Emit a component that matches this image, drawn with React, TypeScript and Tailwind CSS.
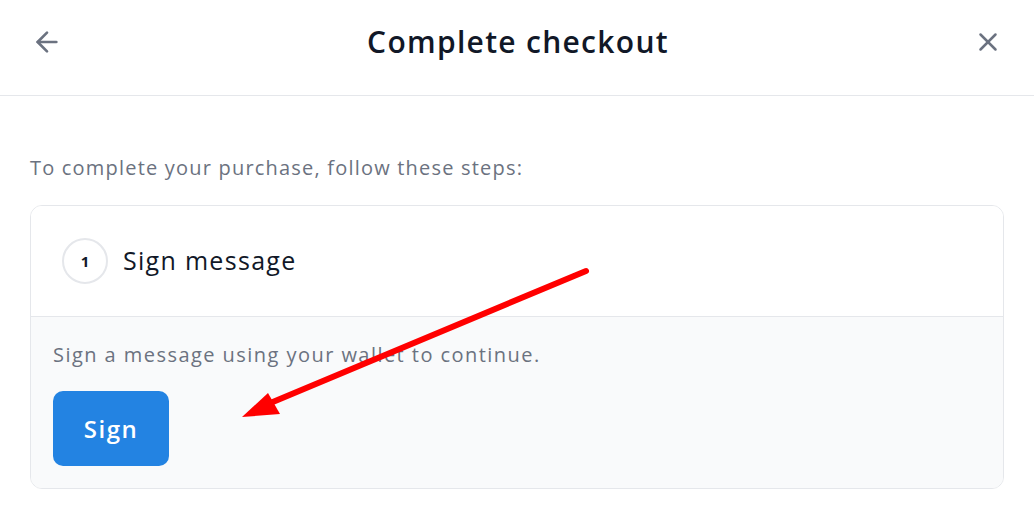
import React from "react";

export default function App() {
  return (
    <div
      className="relative w-[1034px] h-[514px] bg-white overflow-hidden"
      style={{ fontFamily: '"Open Sans", "Noto Sans", sans-serif' }}
    >
      <header className="h-[96px] border-b border-[#e5e7eb] flex items-center justify-between pl-[31px] pr-[31px] pb-[12px]">
        <svg width="32" height="32" viewBox="0 0 24 24" fill="none" stroke="#6b7280" strokeWidth="2" strokeLinecap="round" strokeLinejoin="round">
          <path d="M19 12H5" />
          <path d="M12 19l-7-7 7-7" />
        </svg>
        <h1 className="text-[30px] font-semibold text-[#111827] tracking-[1.3px]">Complete checkout</h1>
        <svg width="30" height="30" viewBox="0 0 24 24" fill="none" stroke="#6b7280" strokeWidth="2" strokeLinecap="round" strokeLinejoin="round">
          <path d="M18 6L6 18" />
          <path d="M6 6l12 12" />
        </svg>
      </header>
      <main className="px-[30px] pt-[58px]">
        <p className="text-[20px] leading-[28px] text-[#6b7280] tracking-[1.2px]">To complete your purchase, follow these steps:</p>
        <div className="mt-[23px] w-[974px] rounded-[12px] border border-[#e5e7eb] overflow-hidden">
          <div className="h-[110px] flex items-center px-[31px] gap-[15px] bg-white">
            <div className="w-[46px] h-[46px] rounded-full border-[2px] border-[#e5e7eb] flex items-center justify-center text-[15px] font-bold text-[#111827]">1</div>
            <div className="text-[25px] font-medium text-[#111827] tracking-[1.3px]">Sign message</div>
          </div>
          <div className="border-t border-[#e5e7eb] bg-[#f9fafb] px-[22px] pt-[24px] pb-[22px]">
            <p className="text-[20px] leading-[28px] text-[#6b7280] tracking-[1.45px]">Sign a message using your wallet to continue.</p>
            <button className="mt-[22px] w-[116px] h-[75px] rounded-[10px] bg-[#2383e2] text-white text-[24px] font-semibold tracking-[1.5px]">Sign</button>
          </div>
        </div>
      </main>
      <svg className="absolute left-0 top-0 pointer-events-none" width="1034" height="514">
        <line x1="586" y1="271" x2="268" y2="404" stroke="#ff0000" strokeWidth="6" strokeLinecap="round" />
        <polygon points="242,417 268,393 280,414" fill="#ff0000" />
      </svg>
    </div>
  );
}
